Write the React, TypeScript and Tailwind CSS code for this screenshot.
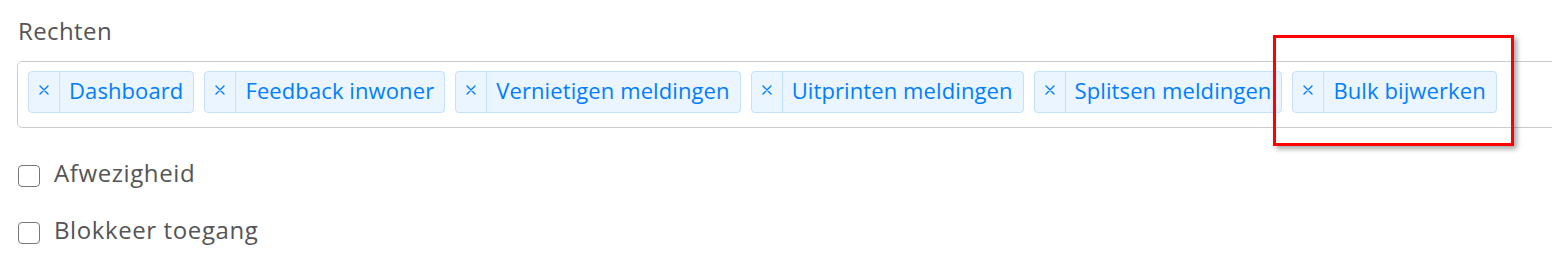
import React from "react";

const tags = [
  "Dashboard",
  "Feedback inwoner",
  "Vernietigen meldingen",
  "Uitprinten meldingen",
  "Splitsen meldingen",
  "Bulk bijwerken",
];

function XIcon() {
  return (
    <svg width="10" height="10" viewBox="0 0 10 10" className="block">
      <path d="M1 1 L9 9 M9 1 L1 9" stroke="#007eff" strokeWidth="1.4" strokeLinecap="round" />
    </svg>
  );
}

function Tag({ label }: { label: string }) {
  return (
    <div className="flex shrink-0 h-[42px] border border-[#c2e0ff] bg-[#ebf5ff] rounded-[4px] text-[#007eff]">
      <div className="w-[31px] h-full border-r border-[#c2e0ff] flex items-center justify-center pb-[5px]">
        <XIcon />
      </div>
      <div className="pl-[9px] pr-[10px] text-[22px] tracking-[0.1px] leading-[37px] pb-[3px] whitespace-nowrap">{label}</div>
    </div>
  );
}

function Check({ label }: { label: string }) {
  return (
    <div className="flex items-start gap-[14px]">
      <div className="mt-[6px] w-[22px] h-[22px] border-[1.5px] border-[#777] rounded-[4px] bg-white" />
      <div className="text-[24px] tracking-[0.6px] leading-[28px] text-[#555]">{label}</div>
    </div>
  );
}

export default function App() {
  return (
    <div
      className="relative w-[1552px] h-[262px] overflow-hidden bg-white"
      style={{ fontFamily: '"Open Sans", sans-serif' }}
    >
      <div className="pl-[17px] pt-[17px]">
        <div className="pl-[1px] text-[24px] tracking-[0.4px] leading-[28px] text-[#555]">Rechten</div>
        <div className="mt-[16px] w-[1600px] h-[67px] border border-[#ccc] rounded-[5px] flex items-start pt-[9px] pl-[10px] gap-[10px]">
          {tags.map((t) => (
            <Tag key={t} label={t} />
          ))}
        </div>
        <div className="mt-[31px] pl-[1px]">
          <Check label="Afwezigheid" />
        </div>
        <div className="mt-[29px] pl-[1px]">
          <Check label="Blokkeer toegang" />
        </div>
      </div>
      <div className="absolute left-[1273px] top-[35px] w-[241px] h-[111px] border-[3px] border-[#ff0000] shadow-[3px_3px_5px_rgba(0,0,0,0.35)]" />
    </div>
  );
}
